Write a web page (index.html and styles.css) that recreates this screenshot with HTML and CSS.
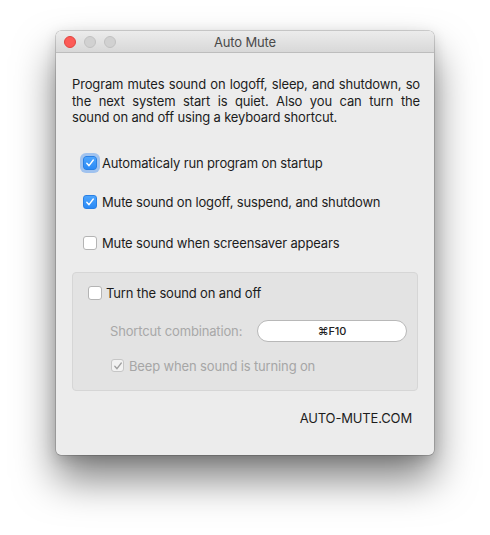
FILE: index.html
```html
<!DOCTYPE html>
<html>
<head>
<meta charset="utf-8">
<link rel="stylesheet" href="styles.css">
</head>
<body>
<div class="stage">
  <div class="window">
    <div class="titlebar">
      <div class="lights">
        <span class="light red"></span>
        <span class="light gray"></span>
        <span class="light gray"></span>
      </div>
      <div class="title">Auto Mute</div>
    </div>
    <div class="content">
      <p class="desc"><span class="line just">Program mutes sound on logoff, sleep, and shutdown, so</span><span class="line just">the next system start is quiet. Also you can turn the</span><span class="line">sound on and off using a keyboard shortcut.</span></p>
      <div class="row r1"><span class="box checked focus"><svg viewBox="0 0 14 14"><path d="M3.8 7.3 L6 9.7 L10.3 4" /></svg></span><span class="label">Automaticaly run program on startup</span></div>
      <div class="row r2"><span class="box checked"><svg viewBox="0 0 14 14"><path d="M3.8 7.3 L6 9.7 L10.3 4" /></svg></span><span class="label">Mute sound on logoff, suspend, and shutdown</span></div>
      <div class="row r3"><span class="box"></span><span class="label">Mute sound when screensaver appears</span></div>
      <div class="group">
        <div class="row g1"><span class="box"></span><span class="label">Turn the sound on and off</span></div>
        <div class="shortcut">
          <span class="dim-label">Shortcut combination:</span>
          <span class="field">⌘F10</span>
        </div>
        <div class="row g3"><span class="box disabled"><svg viewBox="0 0 14 14"><path d="M3.8 7.3 L6 9.7 L10.3 4" /></svg></span><span class="label dim">Beep when sound is turning on</span></div>
      </div>
      <div class="footer">AUTO-MUTE.COM</div>
    </div>
  </div>
</div>
</body>
</html>
```
FILE: styles.css
```css
* { box-sizing: border-box; }
html, body { margin: 0; padding: 0; background: #ffffff; }
body { font-family: Inter, "Liberation Sans", sans-serif; font-size: 13px; letter-spacing: -0.15px; color: #1c1c1c; }

.stage { padding: 31px 0 0 56px; min-height: 535px; }

.window {
  width: 378px;
  height: 424px;
  background: #ececec;
  border-radius: 5px;
  overflow: hidden;
  box-shadow: 0 0 0 0.5px rgba(0,0,0,0.3), 0 24px 40px rgba(0,0,0,0.5), 0 4px 14px rgba(0,0,0,0.15);
}

.titlebar {
  height: 22px;
  background: linear-gradient(#ececec, #d8d8d8);
  border-bottom: 1px solid #bdbdbd;
  display: flex;
  align-items: center;
  position: relative;
}
.lights { display: flex; gap: 8px; padding-left: 8px; }
.light { width: 12px; height: 12px; border-radius: 50%; display: block; }
.light.red { background: #fc5b57; border: 0.5px solid #e0443e; }
.light.gray { background: #d1d1d1; border: 0.5px solid #c1c1c1; }
.title {
  position: absolute; left: 0; right: 0; top: 0; height: 21px;
  line-height: 22px; text-align: center; color: #4a4a4a; font-size: 13px;
}

.content { padding: 23px 14px 0 16px; }

.desc {
  margin: 0;
  line-height: 16.5px;
}
.line { display: block; white-space: nowrap; }
.line.just { white-space: normal; text-align: justify; text-align-last: justify; }

.row { display: flex; align-items: center; height: 20px; }
.r1 { margin: 27px 0 0 11px; }
.r2 { margin: 19px 0 0 11px; }
.r3 { margin: 21px 0 0 11px; }

.box {
  width: 14px; height: 14px; border-radius: 3px;
  background: #ffffff; border: 1px solid #b4b4b4;
  display: flex; align-items: center; justify-content: center;
  flex: none;
}
.box svg { width: 14px; height: 14px; display: block; flex: none; }
.box svg path { fill: none; stroke: #ffffff; stroke-width: 1.4; stroke-linecap: round; stroke-linejoin: round; }
.box.checked {
  background: linear-gradient(#4ea5fd, #2a8af6);
  border: 1px solid #2a80e4;
}
.box.focus { box-shadow: 0 0 0 3px rgba(98, 160, 240, 0.55); }
.box.disabled { background: #f2f2f2; border: 1px solid #c6c6c6; width: 13px; height: 13px; }
.box.disabled svg path { stroke: #a0a0a0; stroke-width: 1.3; }

.label { margin-left: 5px; white-space: nowrap; }
.label.dim { color: #a6a6a6; }

.group {
  margin: 19px 2px 0 0;
  background: #e3e3e3;
  border: 1px solid #d6d6d6;
  border-radius: 4px;
  padding: 10px 0 14px 0;
}
.g1 { margin-left: 15px; }
.g1 .label { margin-left: 4px; }
.shortcut {
  display: flex; align-items: center;
  margin: 17px 0 0 37px;
  height: 22px;
}
.dim-label { color: #a8a8a8; width: 147px; }
.field {
  width: 150px; height: 22px;
  background: #ffffff;
  border: 1px solid #b8b8b8;
  border-radius: 11px;
  display: flex; align-items: center; justify-content: center;
  font-size: 11px; font-weight: 500; color: #222;
}
.g3 { margin: 14px 0 0 38px; }

.footer {
  margin: 17px 8px 0 0;
  height: 20px; line-height: 20px;
  text-align: right;
}
```
